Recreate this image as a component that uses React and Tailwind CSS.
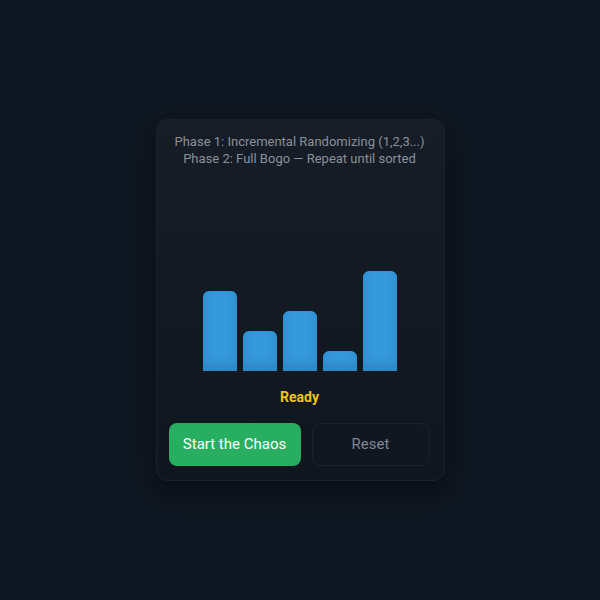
const bars = [4, 2, 3, 1, 5];

export default function App() {
  return (
    <div
      className="w-full h-[600px] bg-[#0f1722] flex items-center justify-center"
      style={{ fontFamily: "Roboto, 'Liberation Sans', sans-serif" }}
    >
      <div className="w-[289px] h-[362px] rounded-xl bg-gradient-to-b from-[#161d27] to-[#10161e] border border-[#1a222c] shadow-[0_10px_30px_rgba(0,0,0,0.45)] pl-[12px] pr-[13px] pt-[13px] flex flex-col">
        <div className="text-center text-[13px] leading-[17px] text-[#8a9099]">
          <p>Phase 1: Incremental Randomizing (1,2,3...)</p>
          <p>Phase 2: Full Bogo — Repeat until sorted</p>
        </div>

        <div className="h-[204px] flex items-end justify-center gap-[6px]">
          {bars.map((v, i) => (
            <div
              key={i}
              className="w-[34px] rounded-t-md bg-[#3498db] shadow-[inset_0_-6px_10px_rgba(0,0,0,0.12)]"
              style={{ height: v * 20 }}
            />
          ))}
        </div>

        <div className="mt-[17px] text-center text-[14px] leading-[18px] font-bold text-[#f1c40f]">
          Ready
        </div>

        <div className="mt-[17px] flex gap-[11px]">
          <button className="w-[132px] h-[43px] rounded-lg bg-[#27ae60] text-white text-[15px]">
            Start the Chaos
          </button>
          <button className="w-[118px] h-[43px] rounded-lg bg-[#111720] border border-[#1b222c] text-[#7f868f] text-[15px]">
            Reset
          </button>
        </div>
      </div>
    </div>
  );
}
